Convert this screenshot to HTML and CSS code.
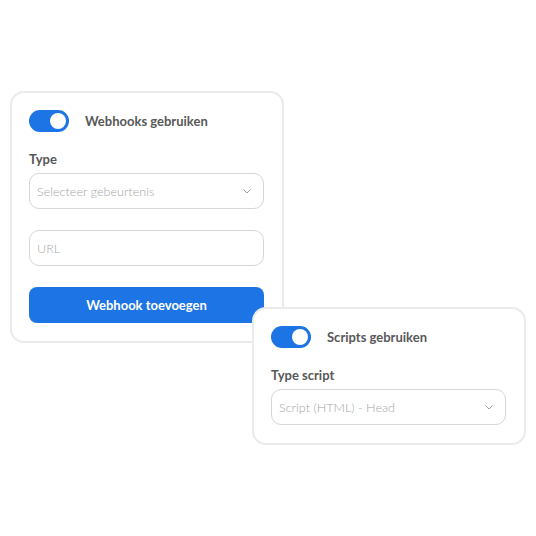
FILE: index.html
```html
<!DOCTYPE html>
<html lang="nl">
<head>
    <meta charset="UTF-8">
    <title>Integraties</title>
    <link rel="stylesheet" href="styles.css">
</head>
<body>
    <div class="stage">
        <div class="card card-webhooks">
            <div class="switch-row">
                <span class="switch"><span class="knob"></span></span>
                <span class="switch-label">Webhooks gebruiken</span>
            </div>
            <label class="field-label">Type</label>
            <div class="field select">
                <span class="placeholder">Selecteer gebeurtenis</span>
                <svg class="chevron" width="8" height="5" viewBox="0 0 8 5"><path d="M0.5 0.5l3.5 3.5 3.5-3.5" fill="none" stroke="#a0a0a0" stroke-width="1"/></svg>
            </div>
            <div class="field url">
                <span class="placeholder">URL</span>
            </div>
            <button class="btn-primary">Webhook toevoegen</button>
        </div>

        <div class="card card-scripts">
            <div class="switch-row">
                <span class="switch"><span class="knob"></span></span>
                <span class="switch-label">Scripts gebruiken</span>
            </div>
            <label class="field-label">Type script</label>
            <div class="field select">
                <span class="placeholder">Script (HTML) - Head</span>
                <svg class="chevron" width="8" height="5" viewBox="0 0 8 5"><path d="M0.5 0.5l3.5 3.5 3.5-3.5" fill="none" stroke="#a0a0a0" stroke-width="1"/></svg>
            </div>
        </div>
    </div>
</body>
</html>
```

FILE: styles.css
```css
* {
    margin: 0;
    padding: 0;
    box-sizing: border-box;
}
body {
    background: #fff;
    font-family: 'Lato', 'Noto Sans', sans-serif;
    color: #4a4a4a;
    width: 536px;
    height: 536px;
    overflow: hidden;
}
.stage {
    position: relative;
    width: 536px;
    height: 536px;
}
.card {
    position: absolute; /* floating cards overlap each other */
    width: 274px;
    background: #fff;
    border: 2px solid #ebebeb;
    border-radius: 14px;
    padding: 17px 18px 18px 17px;
    display: flex;
    flex-direction: column;
}
.card-webhooks {
    left: 10px;
    top: 91px;
}
.card-scripts {
    left: 252px;
    top: 307px;
    z-index: 2;
}
.switch-row {
    display: flex;
    align-items: center;
    gap: 16px;
    height: 22px;
}
.switch {
    width: 40px;
    height: 22px;
    border-radius: 11px;
    background: #1d74e4;
    position: relative;
    flex-shrink: 0;
}
.knob {
    position: absolute;
    right: 3px;
    top: 3px;
    width: 16px;
    height: 16px;
    border-radius: 50%;
    background: #fff;
}
.switch-label {
    font-size: 13px;
    font-weight: 700;
    color: #585858;
}
.field-label {
    margin-top: 19px;
    font-size: 13px;
    font-weight: 700;
    color: #585858;
    line-height: 16px;
}
.field {
    margin-top: 6px;
    height: 36px;
    border: 1px solid #d6d6d6;
    border-radius: 10px;
    display: flex;
    align-items: center;
    justify-content: space-between;
    padding: 0 12px 0 7px;
}
.field.url {
    margin-top: 21px;
}
.placeholder {
    font-size: 12.6px;
    font-weight: 300;
    color: #a6a6a6;
}
.btn-primary {
    margin-top: 21px;
    height: 36px;
    border: none;
    border-radius: 8px;
    background: #1d74e4;
    color: #fff;
    font-family: inherit;
    font-size: 13px;
    font-weight: 700;
}
```
